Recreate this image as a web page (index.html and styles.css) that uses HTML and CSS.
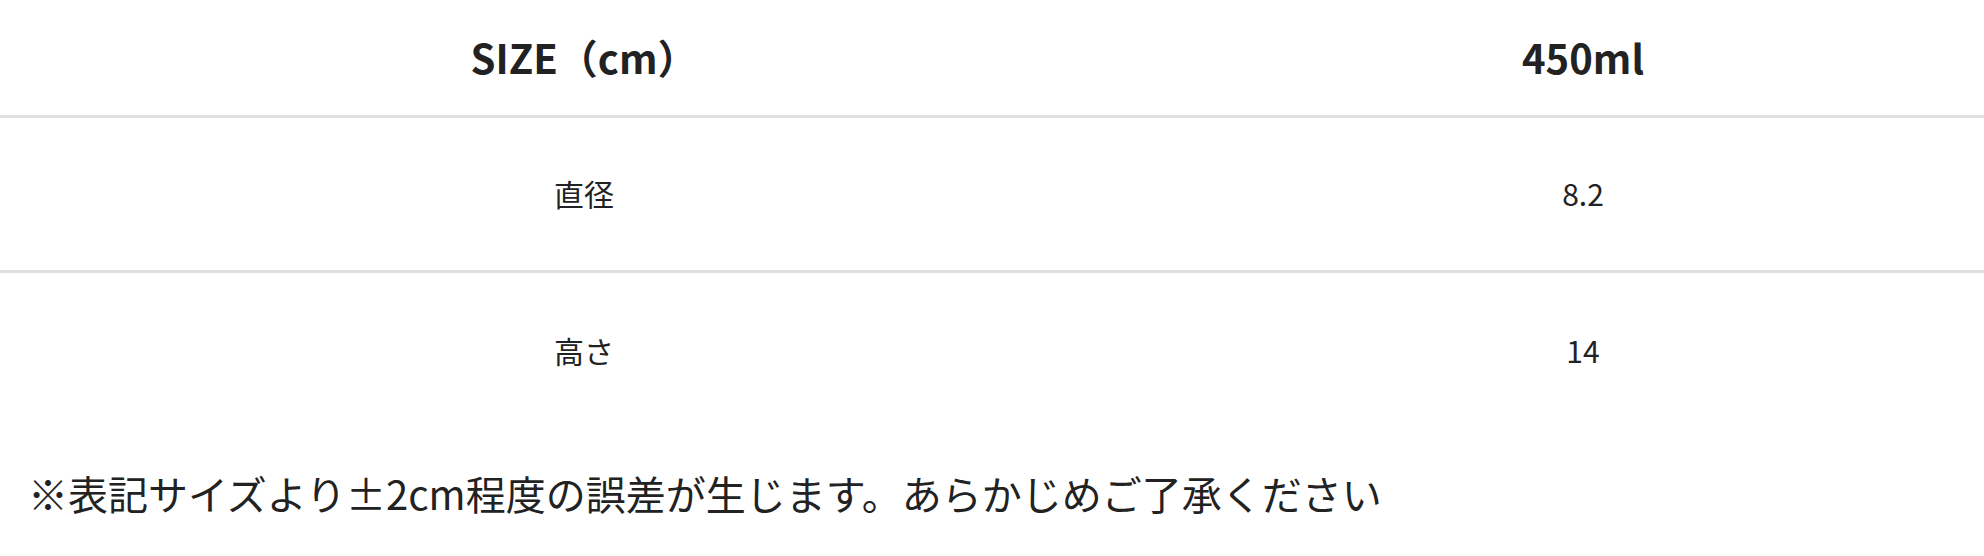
FILE: index.html
```html
<!DOCTYPE html>
<html lang="ja">
<head>
    <meta charset="UTF-8">
    <meta name="viewport" content="width=device-width, initial-scale=1.0">
    <title>サイズ表</title>
    <link rel="stylesheet" href="styles.css">
</head>
<body>
    <table class="size-table">
        <thead>
            <tr>
                <th class="col-name">SIZE（cm）</th>
                <th class="col-value">450ml</th>
            </tr>
        </thead>
        <tbody>
            <tr>
                <td class="col-name">直径</td>
                <td class="col-value">8.2</td>
            </tr>
            <tr class="last-row">
                <td class="col-name">高さ</td>
                <td class="col-value">14</td>
            </tr>
        </tbody>
    </table>
    <p class="note">※表記サイズより±2cm程度の誤差が生じます。あらかじめご了承ください</p>
</body>
</html>
```

FILE: styles.css
```css
* {
    margin: 0;
    padding: 0;
    box-sizing: border-box;
}
body {
    font-family: "Noto Sans CJK JP", "Noto Sans", sans-serif;
    color: #222;
    background: #fff;
}
.size-table {
    width: 100%;
    border-collapse: collapse;
    table-layout: fixed;
}
.size-table th,
.size-table td {
    text-align: center;
    vertical-align: middle;
    border-bottom: 3px solid #e0e0e0;
}
.size-table th {
    font-size: 40px;
    font-weight: 700;
    height: 116px;
    line-height: 1.2;
}
.size-table td {
    font-size: 30px;
    font-weight: 400;
    height: 155px;
    line-height: 1.5;
}
.size-table .col-name {
    width: 1168px;
}
.size-table .col-value {
    padding-left: 14px;
}
.size-table .last-row td {
    border-bottom: none;
    height: 158px;
}
.note {
    font-size: 40px;
    line-height: 60px;
    padding-left: 28px;
    margin-top: 34px;
    white-space: nowrap;
}
```
